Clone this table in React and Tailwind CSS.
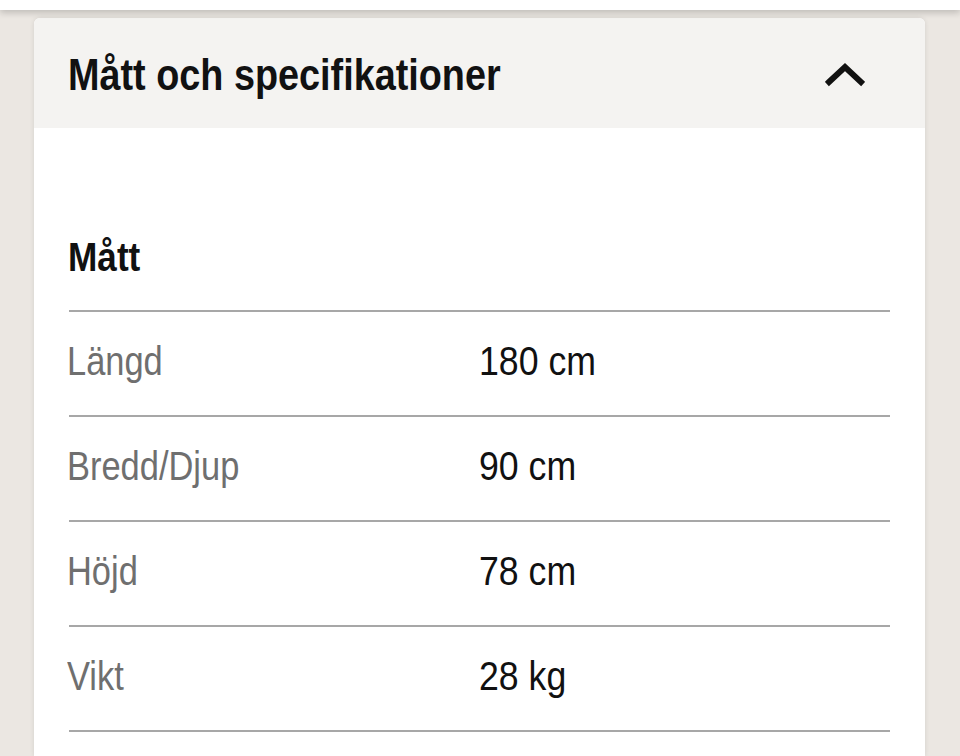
import { useState } from 'react'

const ROWS = [
  { label: 'Längd', value: '180 cm' },
  { label: 'Bredd/Djup', value: '90 cm' },
  { label: 'Höjd', value: '78 cm' },
  { label: 'Vikt', value: '28 kg' },
]

function Chevron({ open }) {
  return (
    <svg width="40" height="28" viewBox="0 0 40 28" className={open ? '' : 'rotate-180'}>
      <polyline points="4,23 20,8 36,23" fill="none" stroke="#111" strokeWidth="6" strokeLinecap="square" strokeLinejoin="miter" />
    </svg>
  )
}

export default function App() {
  const [open, setOpen] = useState(true)

  return (
    <div className="min-h-[756px] bg-[#ebe7e2] font-['Liberation_Sans',Arial,sans-serif] overflow-hidden">
      {/* top bar */}
      <div className="relative z-10 h-[10px] bg-white shadow-[0_3px_6px_rgba(0,0,0,0.18)]" />

      <div className="mt-[8px] ml-[34px] w-[891px] rounded-t-[6px] bg-white shadow-[0_0_5px_rgba(0,0,0,0.1)] min-h-[738px]">
        {/* accordion header */}
        <button
          onClick={() => setOpen(!open)}
          className="w-full h-[110px] flex items-center justify-between pl-[34px] pr-[60px] bg-[#f4f3f1] rounded-t-[6px] text-left"
        >
          <span className="inline-block origin-left scale-x-[0.84] text-[45px] leading-[45px] font-bold text-[#111] whitespace-nowrap mt-[2px]">
            Mått och specifikationer
          </span>
          <Chevron open={open} />
        </button>

        {open && (
          <div className="px-[35px]">
            <div className="pt-[109px] pb-[32px] border-b-2 border-[#a7a7a7]">
              <span className="inline-block origin-left scale-x-[0.88] text-[40px] leading-[40px] font-bold text-[#111] -ml-[1px]">
                Mått
              </span>
            </div>
            {ROWS.map(r => (
              <div key={r.label} className="grid grid-cols-2 pt-[29px] pb-[33px] border-b-2 border-[#a7a7a7]">
                <span className="inline-block origin-left scale-x-[0.84] text-[41px] leading-[41px] text-[#6f6f6f] whitespace-nowrap -ml-[2px]">
                  {r.label}
                </span>
                <span className="inline-block origin-left scale-x-[0.87] text-[41px] leading-[41px] text-[#111] whitespace-nowrap -ml-[1px]">
                  {r.value}
                </span>
              </div>
            ))}
          </div>
        )}
      </div>
    </div>
  )
}
